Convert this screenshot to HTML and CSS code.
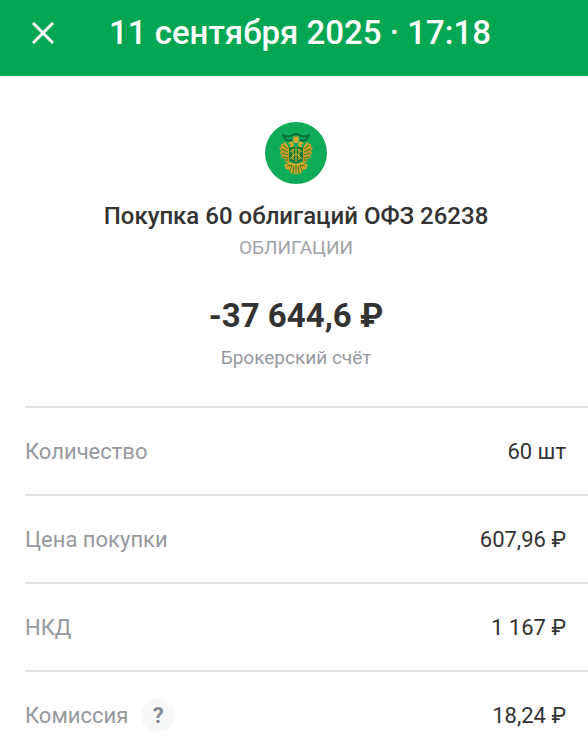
FILE: index.html
```html
<!DOCTYPE html>
<html lang="ru">
<head>
    <meta charset="UTF-8">
    <meta name="viewport" content="width=device-width, initial-scale=1.0">
    <title>Покупка облигаций</title>
    <link rel="stylesheet" href="styles.css">
</head>
<body>
    <header class="top-bar">
        <button class="close-button" type="button" aria-label="Закрыть">
            <svg width="22" height="22" viewBox="0 0 22 22" fill="none" stroke="currentColor" stroke-width="3">
                <path d="M1 1 L21 21 M21 1 L1 21"/>
            </svg>
        </button>
        <h1 class="top-title">11 сентября 2025 · 17:18</h1>
    </header>

    <main>
        <section class="summary">
            <!-- bond issuer logo -->
            <svg class="logo" width="62" height="62" viewBox="0 0 62 62">
                <circle cx="31" cy="31" r="31" fill="#0fab59"/>
                <!-- ribbons -->
                <g fill="none" stroke="#08703b" stroke-width="2">
                    <path d="M17 13 Q24 16 28 13 Q31 11 34 13 Q38 16 45 13"/>
                    <path d="M19 14 Q21 20 27 18 M43 14 Q41 20 35 18"/>
                </g>
                <!-- crown and heads -->
                <g fill="#d6a82c">
                    <path d="M28 17 L29 14 L31 15 L33 14 L34 17 L33 21 H29 Z"/>
                    <path d="M23 21 L27 19 L29 22 L28 26 L24 25 L26 23 Z"/>
                    <path d="M39 21 L35 19 L33 22 L34 26 L38 25 L36 23 Z"/>
                </g>
                <!-- wings -->
                <g fill="#c9a02a">
                    <path d="M24 26 L21 21 L19 20 L18 22 L16 22 L16 25 L14 26 L16 29 L15 31 L17 33 L17 36 L20 37 L20 40 L24 41 Z"/>
                    <path d="M38 26 L41 21 L43 20 L44 22 L46 22 L46 25 L48 26 L46 29 L47 31 L45 33 L45 36 L42 37 L42 40 L38 41 Z"/>
                </g>
                <g fill="none" stroke="#3b7d28" stroke-width="1">
                    <path d="M23 27 L18 23 M23 30 L16 27 M23 33 L17 31 M23 36 L18 35 M23 38 L20 38"/>
                    <path d="M39 27 L44 23 M39 30 L46 27 M39 33 L45 31 M39 36 L44 35 M39 38 L42 38"/>
                </g>
                <!-- shield -->
                <path d="M24 25 H38 V38 L31 42 L24 38 Z" fill="#187d36"/>
                <g fill="none" stroke="#e5bc30" stroke-width="1">
                    <path d="M28 27 V38 M31 25 V40 M34 27 V38 M25 30 L29 27 M37 30 L33 27 M25 37 L30 32 M37 37 L32 32"/>
                </g>
                <!-- tail and claws -->
                <path d="M19 43 L25 40 L31 42 L37 40 L43 43 L41 47 L38 48 L36 51 L31 52 L26 51 L24 48 L21 47 Z" fill="#d1a52a"/>
                <g fill="none" stroke="#3b7d28" stroke-width="1">
                    <path d="M22 44 L27 43 L25 49 M40 44 L35 43 L37 49 M29 44 L28 51 M33 44 L34 51 M31 43 V51"/>
                </g>
            </svg>
            <h2 class="product-name">Покупка 60 облигаций ОФЗ 26238</h2>
            <p class="category">ОБЛИГАЦИИ</p>
            <p class="amount">-37 644,6 ₽</p>
            <p class="account">Брокерский счёт</p>
        </section>

        <dl class="details">
            <div class="row">
                <dt>Количество</dt>
                <dd>60 шт</dd>
            </div>
            <div class="row">
                <dt>Цена покупки</dt>
                <dd>607,96 ₽</dd>
            </div>
            <div class="row">
                <dt>НКД</dt>
                <dd>1 167 ₽</dd>
            </div>
            <div class="row">
                <dt>Комиссия <button class="help-button" type="button">?</button></dt>
                <dd>18,24 ₽</dd>
            </div>
        </dl>
    </main>
</body>
</html>
```
FILE: styles.css
```css
body {
    font-family: Roboto, "Liberation Sans", sans-serif;
    margin: 0;
    background-color: #fff;
    color: #333;
}

h1, h2, p, dl, dd {
    margin: 0;
}

button {
    border: none;
    padding: 0;
    font-family: inherit;
    cursor: pointer;
}

.top-bar {
    display: flex;
    align-items: center;
    padding: 13px 32px 23px;
    background-color: #03a653;
    color: #fff;
}

.close-button {
    display: flex;
    background: none;
    color: inherit;
}

.top-title {
    flex: 1;
    padding-right: 10px;
    font-size: 33px;
    font-weight: 500;
    line-height: 40px;
    text-align: center;
}

.summary {
    display: flex;
    flex-direction: column;
    align-items: center;
    padding: 46px 20px 32px 24px;
    text-align: center;
}

.logo {
    margin-bottom: 16px;
}

.product-name {
    font-size: 24px;
    font-weight: 500;
    line-height: 32px;
}

.category {
    margin-bottom: 28px;
    font-size: 19px;
    line-height: 32px;
    color: #a0a3a8;
}

.amount {
    margin-bottom: 2px;
    font-size: 33px;
    font-weight: 700;
    line-height: 48px;
}

.account {
    font-size: 19px;
    line-height: 32px;
    color: #96999e;
}

.details {
    margin-left: 25px;
    font-size: 22px;
}

.row {
    display: flex;
    justify-content: space-between;
    align-items: center;
    height: 86px;
    padding-right: 22px;
    border-top: 2px solid #e3e3e3;
}

.row dt {
    display: flex;
    align-items: center;
    gap: 13px;
    color: #96999e;
}

.help-button {
    width: 34px;
    height: 34px;
    border-radius: 50%;
    background-color: #f7f9f9;
    color: #85898e;
    font-size: 22px;
    font-weight: 700;
}
```
